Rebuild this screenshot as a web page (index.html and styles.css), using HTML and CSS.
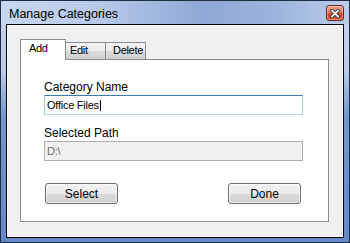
FILE: index.html
```html
<!DOCTYPE html>
<html lang="en">
<head>
  <meta charset="UTF-8">
  <title>Manage Categories</title>
  <link rel="stylesheet" href="styles.css">
</head>
<body>
  <div class="window">
    <div class="titlebar">
      <span class="title">Manage Categories</span>
      <div class="close" title="Close">
        <svg width="10" height="9" viewBox="0 0 10 9">
          <path d="M2 1.5 L8 7.5 M8 1.5 L2 7.5" stroke="#3a3a3a" stroke-width="3.6" stroke-linecap="square"/>
          <path d="M2 1.5 L8 7.5 M8 1.5 L2 7.5" stroke="#e9e9e9" stroke-width="1.8" stroke-linecap="square"/>
        </svg>
      </div>
    </div>

    <div class="client">
      <div class="tabs">
        <div class="tab active">Add</div>
        <div class="tab">Edit</div>
        <div class="tab">Delete</div>
      </div>

      <div class="panel">
        <div class="label">Category Name</div>
        <div class="textbox focused">Office Files<span class="caret"></span></div>

        <div class="label second">Selected Path</div>
        <div class="textbox disabled">D:\</div>

        <div class="buttons">
          <button class="btn">Select</button>
          <button class="btn">Done</button>
        </div>
      </div>
    </div>
  </div>
</body>
</html>
```

FILE: styles.css
```css
* {
  box-sizing: border-box;
}

html, body {
  margin: 0;
  padding: 0;
  width: 350px;
  height: 243px;
  overflow: hidden;
  font-family: 'Liberation Sans', Arial, sans-serif;
}

.window {
  width: 350px;
  height: 243px;
  border: 1px solid #1f2d42;
  background: linear-gradient(to bottom, #c4d5ee 0, #b9cce9 70px, #7398cd 115px, #6489c6 100%);
  padding: 0 5px 4px;
  display: flex;
  flex-direction: column;
}

.titlebar {
  height: 23px;
  margin: 0 -5px;
  padding: 0 5px 0 8px;
  display: flex;
  justify-content: space-between;
  align-items: flex-start;
  background: linear-gradient(90deg, #c7d8ef 0%, #b6c9e8 28%, #8ea9d5 58%, #9ab3db 78%, #bacce8 100%);
}

.title {
  margin-top: 6px;
  font-size: 12.5px;
  line-height: 15px;
  color: #000;
}

.close {
  margin-top: 4px;
  width: 18px;
  height: 16px;
  border: 1px solid #6e2a20;
  border-radius: 3px;
  background: linear-gradient(to bottom, #eca591 0%, #e07b62 45%, #c9442a 55%, #d85a3a 100%);
  box-shadow: inset 0 0 0 1px rgba(255, 255, 255, 0.3);
  display: flex;
  align-items: center;
  justify-content: center;
}

.client {
  flex: 1;
  border: 1px solid #000;
  box-shadow: inset 0 0 0 1px #fff;
  background-color: #f0f0f0;
  padding: 14px 14px 15px 13px;
  display: flex;
  flex-direction: column;
}

/* tabs */

.tabs {
  height: 20px;
  display: flex;
  align-items: flex-end;
  font-size: 11px;
  letter-spacing: -0.3px;
  line-height: 13px;
  color: #000;
}

.tab {
  width: 40px;
  height: 17px;
  padding: 1px 0 0 4px;
  border-top: 1px solid #898c95;
  border-right: 1px solid #898c95;
  background: linear-gradient(to bottom, #f3f3f3 0%, #ebebeb 50%, #dddddd 50%, #cfcfcf 100%);
}

.tab:last-child {
  padding-left: 7px;
}

.tab.active {
  width: 46px;
  height: 21px;
  margin-bottom: -1px;
  padding: 2px 0 0 8px;
  border-left: 1px solid #898c95;
  background: #fff;
  position: relative;
  z-index: 1;
}

.panel {
  flex: 1;
  background: #fff;
  border: 1px solid #898c95;
  padding: 20px 25px 0 23px;
}

.label {
  font-size: 12px;
  line-height: 15px;
  color: #000;
}

.label.second {
  margin-top: 11px;
}

.textbox {
  height: 20px;
  padding: 2px 0 0 2px;
  font-size: 11px;
  letter-spacing: -0.25px;
  line-height: 14px;
  color: #000;
  white-space: nowrap;
}

.textbox.focused {
  border: 1px solid #a4c9e3;
  border-top-color: #3d7bad;
  border-bottom-color: #b7d9ed;
}

.textbox.disabled {
  border: 1px solid #afafaf;
  background: #f0f0f0;
  color: #6d6d6d;
}

.caret {
  display: inline-block;
  width: 1px;
  height: 11px;
  margin-left: 1px;
  background: #000;
  vertical-align: -2px;
}

.buttons {
  margin-top: 22px;
  padding: 0 2px 0 1px;
  display: flex;
  justify-content: space-between;
}

.btn {
  width: 73px;
  height: 21px;
  padding: 0;
  border: 1px solid #707070;
  border-radius: 3px;
  background: linear-gradient(to bottom, #f2f2f2 0%, #ebebeb 50%, #dddddd 50%, #cfcfcf 100%);
  box-shadow: inset 0 0 0 1px rgba(255, 255, 255, 0.6);
  font-family: 'Liberation Sans', Arial, sans-serif;
  font-size: 12px;
  color: #000;
}
```
